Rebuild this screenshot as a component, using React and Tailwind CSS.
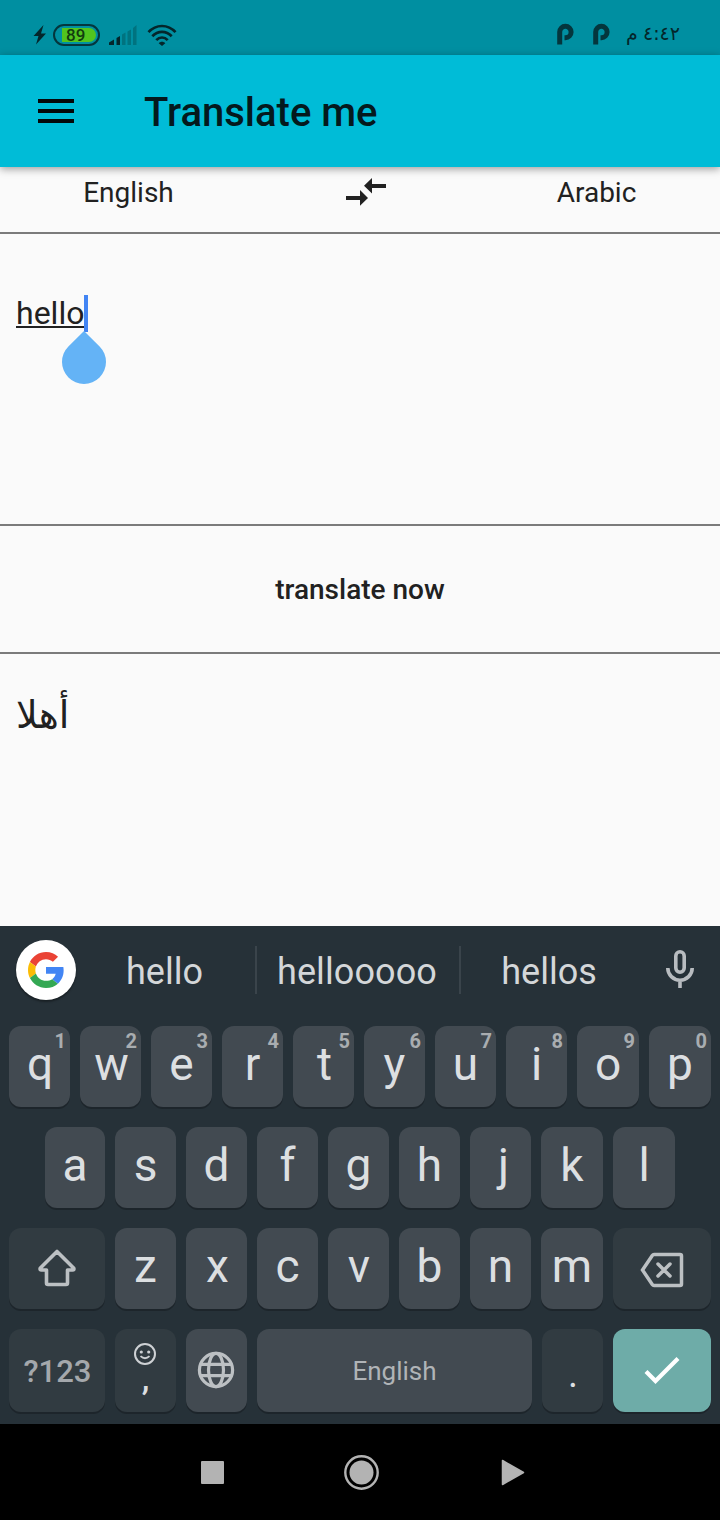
import React from "react";

const keyBase =
  "relative flex shrink-0 justify-center rounded-[12px] shadow-[0_2px_0_#1d252b]";

const nudges = { j: "pl-[6px]", t: "pl-[2px]", w: "pl-[2px]", x: "pl-[2px]", v: "pl-[1px]", q: "pl-[1px]" };

function Key({ label, hint, width = "w-[61px]" }) {
  return (
    <div className={`${keyBase} h-[81px] bg-[#424a51] ${width}`}>
      <span className={`text-[46px] leading-[77px] text-[#dcdfe1] ${nudges[label] || ""}`}>{label}</span>
      {hint && (
        <span className="absolute right-[4px] top-0 text-[20px] font-bold leading-[30px] text-[#a9adb0]">
          {hint}
        </span>
      )}
    </div>
  );
}

function StatusBar() {
  return (
    <div className="flex h-[55px] items-start justify-between bg-[#008fa1] pt-[23px]">
      <div className="flex items-start">
        <svg className="ml-[33px] mt-[2px]" width="14" height="20" viewBox="0 0 14 20">
          <path d="M10.5 0 .5 11h5L3 19.5 13 8.500H8z" fill="#04262b" />
        </svg>
        <div className="relative ml-[6px] mt-[1px] flex h-[22px] w-[47px] items-center rounded-full border-2 border-[#04363d] pl-[7px]">
          <div className="flex h-[14px] w-[34px] items-center rounded-l-[1px] rounded-r-full bg-[#52c41f] pl-[4px] text-[17px] font-medium leading-none text-[#123c10]">
            89
          </div>
        </div>
        <svg className="ml-[9px] mt-[2px]" width="28" height="20" viewBox="0 0 28 20">
          <path d="M0 20v-2.500l5-3V20z" fill="#04262b" />
          <path d="M7.500 20v-7l3.500-2v9z" fill="#04262b" />
          <path d="M13 20V9.500l3.500-2V20zM18.500 20V6.500l3.500-2V20zM24 20V3l3.500-3v20z" fill="#00737f" />
        </svg>
        <svg className="ml-[10px] mt-[1px]" width="30" height="22" viewBox="0 0 30 22">
          <g fill="none" stroke="#04262b" strokeWidth="2.700">
            <path d="M1.500 8.200C9-.1 21-.1 28.500 8.200" />
            <path d="M5.300 12.200c5.500-5.800 13.900-5.800 19.400 0" />
            <path d="M9.300 16.200c3.300-3.600 8.100-3.600 11.400 0" />
          </g>
          <path d="M11.700 19.200c1.700-2 4.900-2 6.600 0L15 22z" fill="#04262b" />
        </svg>
      </div>
      <div className="flex items-start">
        <div className="mr-[16px] flex gap-[19px]">
          {[0, 1].map((n) => (
            <svg key={n} width="17" height="22" viewBox="0 0 17 22">
              <path
                d="M2.700 21.500V9a5.700 5.700 0 1 1 5.700 5.700H7.500"
                fill="none"
                stroke="#04363d"
                strokeWidth="5"
              />
            </svg>
          ))}
        </div>
        <div
          dir="rtl"
          className="mr-[40px] flex w-[54px] items-baseline justify-between whitespace-nowrap font-['DejaVu_Sans',sans-serif] text-[19px] leading-[20px] text-[#04262b]"
        >
          <span>٤:٤٢</span>
          <span>م</span>
        </div>
      </div>
    </div>
  );
}

function AppBar() {
  return (
    <div className="relative z-10 flex h-[112px] items-center bg-[#00bcd7] shadow-[0_2px_8px_rgba(0,0,0,0.38)]">
      <div className="ml-[38px] flex w-9 flex-col gap-[6px]">
        <div className="h-1 bg-[#04090a]" />
        <div className="h-1 bg-[#04090a]" />
        <div className="h-1 bg-[#04090a]" />
      </div>
      <h1 className="ml-[70px] pt-[4px] text-[40px] font-medium leading-[48px] text-[#04191d]">
        Translate me
      </h1>
    </div>
  );
}

function LanguageRow() {
  return (
    <div className="flex h-[67px] border-b-2 border-[#7b7b7b] pt-[9px] text-[28px] leading-[33px]">
      <div className="w-[257px] text-center">English</div>
      <div className="flex w-[216px] justify-center">
        <svg className="ml-[2px] mt-[2px]" width="40" height="28" viewBox="0 0 40 28">
          <path
            fill="#212121"
            d="M26 6V0l-8 7.800 8 7.700V10h14V6zM14 12v6H0v4h14v5.700l8-7.700z"
          />
        </svg>
      </div>
      <div className="w-[247px] text-center">Arabic</div>
    </div>
  );
}

function Keyboard() {
  return (
    <div className="flex h-[498px] flex-col bg-[#263138]">
      <div className="flex h-[100px] items-start pt-[14px] text-[36px] leading-[64px] text-[#d4d7d9]">
        <div className="ml-4 flex h-[60px] w-[60px] items-center justify-center rounded-full bg-white shadow-[0_2px_2px_rgba(0,0,0,0.35)]">
          <svg width="36" height="36" viewBox="0 0 48 48">
            <path fill="#EA4335" d="M24 9.500c3.540 0 6.710 1.220 9.210 3.600l6.850-6.850C35.900 2.380 30.470 0 24 0 14.620 0 6.510 5.380 2.560 13.220l7.980 6.190C12.430 13.720 17.740 9.500 24 9.500z" />
            <path fill="#4285F4" d="M47.500 24.550c0-1.570-.15-3.090-.38-4.550H24v9.020h12.940c-.58 2.960-2.260 5.480-4.780 7.180l7.730 6c4.510-4.180 7.610-10.360 7.610-17.650z" />
            <path fill="#FBBC05" d="M10.530 28.590c-.48-1.450-.76-2.990-.76-4.590s.27-3.140.76-4.590l-7.980-6.190C.92 16.460 0 20.120 0 24c0 3.880.92 7.540 2.560 10.780l7.970-6.190z" />
            <path fill="#34A853" d="M24 48c6.480 0 11.930-2.130 15.890-5.810l-7.730-6c-2.150 1.450-4.920 2.300-8.160 2.300-6.260 0-11.570-4.220-13.470-9.910l-7.980 6.190C6.510 42.620 14.620 48 24 48z" />
          </svg>
        </div>
        <div className="w-[179px] pr-[2px] text-center">hello</div>
        <div className="mt-[6px] h-12 w-[2px] bg-[#3a444b]" />
        <div className="w-[202px] pr-[2px] text-center tracking-[0.1px]">hellooooo</div>
        <div className="mt-[6px] h-12 w-[2px] bg-[#3a444b]" />
        <div className="w-[177px] pr-[1px] text-center">hellos</div>
        <svg className="ml-[27px] mt-[9px]" width="30" height="40" viewBox="0 0 30 40" fill="none" stroke="#b8bcc0" strokeWidth="3.600">
          <rect x="10.800" y="2.800" width="8.400" height="20.400" rx="4.200" />
          <path d="M2.800 19a12.200 12.200 0 0 0 24.400 0M15 30v9" />
        </svg>
      </div>

      <div className="flex flex-col gap-5">
        <div className="flex gap-[10px] pl-[9px]">
          {["q", "w", "e", "r", "t", "y", "u", "i", "o", "p"].map((c, i) => (
            <Key key={c} label={c} hint={String((i + 1) % 10)} width={i > 7 ? "w-[62px]" : "w-[61px]"} />
          ))}
        </div>
        <div className="flex gap-[10px] pl-[45px]">
          {["a", "s", "d", "f", "g", "h", "j", "k", "l"].map((c, i) => (
            <Key key={c} label={c} width={i === 0 ? "w-[60px]" : i > 6 ? "w-[62px]" : "w-[61px]"} />
          ))}
        </div>
        <div className="flex gap-[10px] pl-[9px]">
          <div className={`${keyBase} h-[81px] w-[96px] bg-[#313b41]`}>
            <svg className="mt-[20px]" width="40" height="40" viewBox="0 0 40 40">
              <path d="M20 3.500 36.800 20.300q.6 1.700-1.300 1.700H30.500v13q0 1.500-1.500 1.500H11q-1.500 0-1.500-1.500V22H4.500q-1.900 0-1.300-1.700z" fill="none" stroke="#bcc0c3" strokeWidth="3.600" strokeLinejoin="round" />
            </svg>
          </div>
          {["z", "x", "c", "v", "b", "n", "m"].map((c) => (
            <Key key={c} label={c} width={c === "m" ? "w-[62px]" : "w-[61px]"} />
          ))}
          <div className={`${keyBase} h-[81px] w-[98px] bg-[#313b41]`}>
            <svg className="mt-[24px]" width="44" height="36" viewBox="0 0 44 36" fill="none" stroke="#bcc0c3" strokeWidth="3.500">
              <path d="M14 2.500H40q1.500 0 1.500 1.500V32q0 1.500-1.500 1.500H14q-1 0-1.700-1L2.500 18 12.300 3.500q.7-1 1.700-1z" />
              <path d="m18 12 12 12M30 12l-12 12" strokeLinecap="round" />
            </svg>
          </div>
        </div>
        <div className="flex gap-[10px] pl-[9px]">
          <div className={`${keyBase} h-[83px] w-[96px] bg-[#313b41] pl-[1px] text-[31px] font-medium leading-[85px] text-[#a4a8ac]`}>
            ?123
          </div>
          <div className={`${keyBase} h-[83px] w-[61px] flex-col items-center !justify-start bg-[#313b41] pr-[1px]`}>
            <svg className="mt-[14px] shrink-0" width="22" height="22" viewBox="0 0 22 22">
              <circle cx="11" cy="11" r="10" fill="none" stroke="#ced1d4" strokeWidth="2" />
              <circle cx="7.300" cy="9" r="1.600" fill="#ced1d4" />
              <circle cx="14.700" cy="9" r="1.600" fill="#ced1d4" />
              <path d="M6.500 13.200q4.500 4.200 9 0" fill="none" stroke="#ced1d4" strokeWidth="1.800" />
            </svg>
            <span className="-mt-[7px] pl-[1px] text-[34px] font-medium leading-[40px] text-[#dcdfe1]">,</span>
          </div>
          <div className={`${keyBase} h-[83px] w-[61px] bg-[#424a51]`}>
            <svg className="ml-[-1px] mt-[22px]" width="38" height="38" viewBox="0 0 38 38" fill="none" stroke="#bcc0c3" strokeWidth="3.200">
              <circle cx="19" cy="19" r="16.600" />
              <ellipse cx="19" cy="19" rx="7.500" ry="16.600" />
              <path d="M4 13.300h30M4 24.700h30" />
            </svg>
          </div>
          <div className={`${keyBase} h-[83px] w-[275px] bg-[#424a51] text-[26px] leading-[84px] text-[#b0b4b7]`}>
            English
          </div>
          <div className={`${keyBase} h-[83px] w-[61px] bg-[#313b41] pl-[1px] pt-[17px] text-[38px] leading-[57px] text-[#dcdfe1]`}>
            .
          </div>
          <div className={`${keyBase} h-[83px] w-[98px] bg-[#6eaca8]`}>
            <svg className="mt-[27px]" width="36" height="28" viewBox="0 0 36 28">
              <path d="m2 15.500 9.500 9.500L34 2.500" fill="none" stroke="#fff" strokeWidth="4.200" />
            </svg>
          </div>
        </div>
      </div>
    </div>
  );
}

function NavigationBar() {
  return (
    <div className="flex h-24 items-start bg-black">
      <div className="ml-[201px] mt-[37px] h-[23px] w-[23px] rounded-[1px] bg-[#b3b3b3]" />
      <svg className="ml-[120px] mt-[31px]" width="35" height="35" viewBox="0 0 35 35">
        <circle cx="17.500" cy="17.500" r="16.200" fill="none" stroke="#b3b3b3" strokeWidth="2.400" />
        <circle cx="17.500" cy="17.500" r="12" fill="#b3b3b3" />
      </svg>
      <svg className="ml-[122px] mt-[35px]" width="24" height="27" viewBox="0 0 24 27">
        <path d="M1.500 1.500 22.500 13.500 1.500 25.500z" fill="#b3b3b3" stroke="#b3b3b3" strokeWidth="1.500" strokeLinejoin="round" />
      </svg>
    </div>
  );
}

export default function App() {
  return (
    <div className="flex h-[1520px] w-[720px] flex-col overflow-hidden bg-[#fafafa] font-['Roboto',sans-serif] text-[#212121]">
      <StatusBar />
      <AppBar />
      <LanguageRow />
      <div className="h-[292px] border-b-2 border-[#7b7b7b] pl-4 pt-[61px]">
        <div className="relative flex h-[37px] w-[72px] justify-between">
          <span className="text-[32px] leading-[37px] underline decoration-[1.500px] underline-offset-[2px]">hello</span>
          <div className="absolute right-0 top-0 h-[37px] w-1 bg-[#4285f4]" />
          <svg className="absolute left-[46px] top-[36px]" width="44" height="53" viewBox="0 0 44 53">
            <path d="M22 0 37.600 15.400A22 22 0 1 1 6.400 15.400z" fill="#64b3f6" />
          </svg>
        </div>
      </div>
      <div className="flex h-[128px] items-center justify-center border-b-2 border-[#7b7b7b] pt-[2px] text-[28px] font-medium">
        translate now
      </div>
      <div className="h-[272px] pl-4 pt-[41px] font-['DejaVu_Sans',sans-serif] text-[38px] leading-[40px]">
        <span dir="rtl">أهلا</span>
      </div>
      <Keyboard />
      <NavigationBar />
    </div>
  );
}
